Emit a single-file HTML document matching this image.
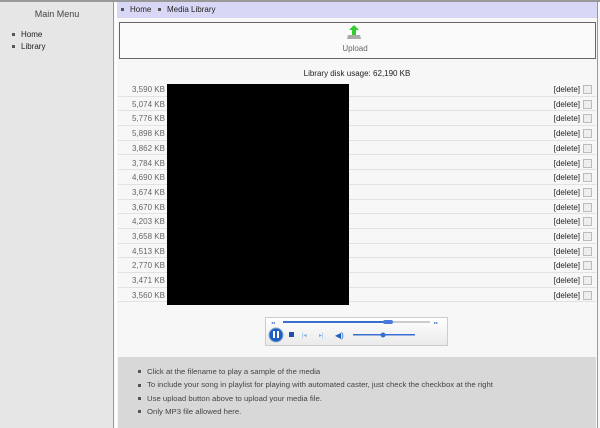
<!DOCTYPE html>
<html><head><style>
*{margin:0;padding:0;box-sizing:border-box}
body{width:600px;height:428px;overflow:hidden;background:#f7f7f7;font-family:"Liberation Sans",sans-serif;font-size:8px;color:#333;position:relative}
.abs{position:absolute}
.sq{display:inline-block;width:3px;height:3px;background:#555;vertical-align:middle;margin-right:6px}
.row{position:absolute;left:118px;width:478px;height:14.7px;border-bottom:1px solid #e2e2e2;line-height:15px;color:#666}
.row .s{position:absolute;left:14px}
.row .d{position:absolute;right:16px;color:#222}
.row .c{position:absolute;right:4px;top:3px;width:9px;height:9px;border:1px solid #bbb;background:#eee}
</style></head><body>
<div class="abs" style="left:0;top:0;width:600px;height:2px;background:#999"></div>
<div class="abs" style="left:0;top:2px;width:114px;height:426px;background:#e6e6e6;border-right:1px solid #999"></div>
<div class="abs" style="left:115px;top:2px;width:2px;height:426px;background:#fff"></div>
<div class="abs" style="left:597px;top:2px;width:1px;height:426px;background:#999"></div>
<div class="abs" style="left:0;top:9px;width:114px;text-align:center;font-size:9px;color:#444">Main Menu</div>
<div class="abs" style="left:12px;top:29px;font-size:8px;color:#222;line-height:12px"><div><span class="sq"></span>Home</div><div><span class="sq"></span>Library</div></div>
<div class="abs" style="left:117px;top:2px;width:480px;height:16px;background:#d8d8f6;line-height:16px;padding-left:4px;color:#222"><span class="sq"></span>Home &nbsp; <span class="sq"></span>Media Library</div>
<div class="abs" style="left:119px;top:22px;width:477px;height:37px;border:1px solid #666;background:#fafafa"></div>
<svg class="abs" style="left:345px;top:24px" width="18" height="18" viewBox="0 0 18 18"><path d="M3 11h12l1 4H2z" fill="#aaa"/><path d="M9 1l5 5h-3v5H7V6H4z" fill="#3c3"/></svg>
<div class="abs" style="left:300px;top:44px;width:110px;text-align:center;color:#666">Upload</div>
<div class="abs" style="left:118px;top:69px;width:478px;text-align:center;color:#222">Library disk usage: 62,190 KB</div>
<div class="row" style="top:82px"><span class="s">3,590 KB</span><span class="d">[delete]</span><span class="c"></span></div>
<div class="row" style="top:96.7px"><span class="s">5,074 KB</span><span class="d">[delete]</span><span class="c"></span></div>
<div class="row" style="top:111.4px"><span class="s">5,776 KB</span><span class="d">[delete]</span><span class="c"></span></div>
<div class="row" style="top:126.1px"><span class="s">5,898 KB</span><span class="d">[delete]</span><span class="c"></span></div>
<div class="row" style="top:140.8px"><span class="s">3,862 KB</span><span class="d">[delete]</span><span class="c"></span></div>
<div class="row" style="top:155.5px"><span class="s">3,784 KB</span><span class="d">[delete]</span><span class="c"></span></div>
<div class="row" style="top:170.2px"><span class="s">4,690 KB</span><span class="d">[delete]</span><span class="c"></span></div>
<div class="row" style="top:184.9px"><span class="s">3,674 KB</span><span class="d">[delete]</span><span class="c"></span></div>
<div class="row" style="top:199.6px"><span class="s">3,670 KB</span><span class="d">[delete]</span><span class="c"></span></div>
<div class="row" style="top:214.3px"><span class="s">4,203 KB</span><span class="d">[delete]</span><span class="c"></span></div>
<div class="row" style="top:229px"><span class="s">3,658 KB</span><span class="d">[delete]</span><span class="c"></span></div>
<div class="row" style="top:243.7px"><span class="s">4,513 KB</span><span class="d">[delete]</span><span class="c"></span></div>
<div class="row" style="top:258.4px"><span class="s">2,770 KB</span><span class="d">[delete]</span><span class="c"></span></div>
<div class="row" style="top:273.1px"><span class="s">3,471 KB</span><span class="d">[delete]</span><span class="c"></span></div>
<div class="row" style="top:287.8px"><span class="s">3,560 KB</span><span class="d">[delete]</span><span class="c"></span></div>
<div class="abs" style="left:167px;top:84px;width:182px;height:221px;background:#000"></div>
<div class="abs" style="left:265px;top:317px;width:183px;height:29px;border:1px solid #ccc;background:linear-gradient(#fff,#eaeaea)"></div>
<svg class="abs" style="left:265px;top:317px" width="183" height="29">
<rect x="18" y="4" width="147" height="2" fill="#ccc"/><rect x="18" y="4" width="107" height="2" fill="#3a6fd0"/><rect x="118" y="3" width="10" height="4" rx="2" fill="#4a7ad8"/>
<text x="6" y="7" font-size="4" fill="#46c">◂◂</text><text x="169" y="7" font-size="4" fill="#36c">▸▸</text>
<circle cx="11" cy="18" r="7" fill="#1d5fc8" stroke="#8ab" stroke-width="1"/><rect x="8" y="14" width="2" height="7" fill="#fff"/><rect x="12" y="14" width="2" height="7" fill="#fff"/>
<rect x="24" y="15" width="5" height="5" fill="#1d4fb0"/>
<text x="37" y="20" font-size="6" fill="#7ad">|◂</text><text x="54" y="20" font-size="6" fill="#7ad">▸|</text>
<text x="70" y="21" font-size="8" fill="#1d5fc8">◀)</text>
<rect x="88" y="17" width="62" height="1.5" fill="#3a6fd0"/><circle cx="118" cy="18" r="2.5" fill="#3a6fd0"/>
</svg>
<div class="abs" style="left:118px;top:357px;width:478px;height:71px;background:#d8d8d8;padding:8px 0 0 20px;color:#444;line-height:13.3px;font-size:7.75px">
<div><span class="sq"></span>Click at the filename to play a sample of the media</div>
<div><span class="sq"></span>To include your song in playlist for playing with automated caster, just check the checkbox at the right</div>
<div><span class="sq"></span>Use upload button above to upload your media file.</div>
<div><span class="sq"></span>Only MP3 file allowed here.</div>
</div>
</body></html>
